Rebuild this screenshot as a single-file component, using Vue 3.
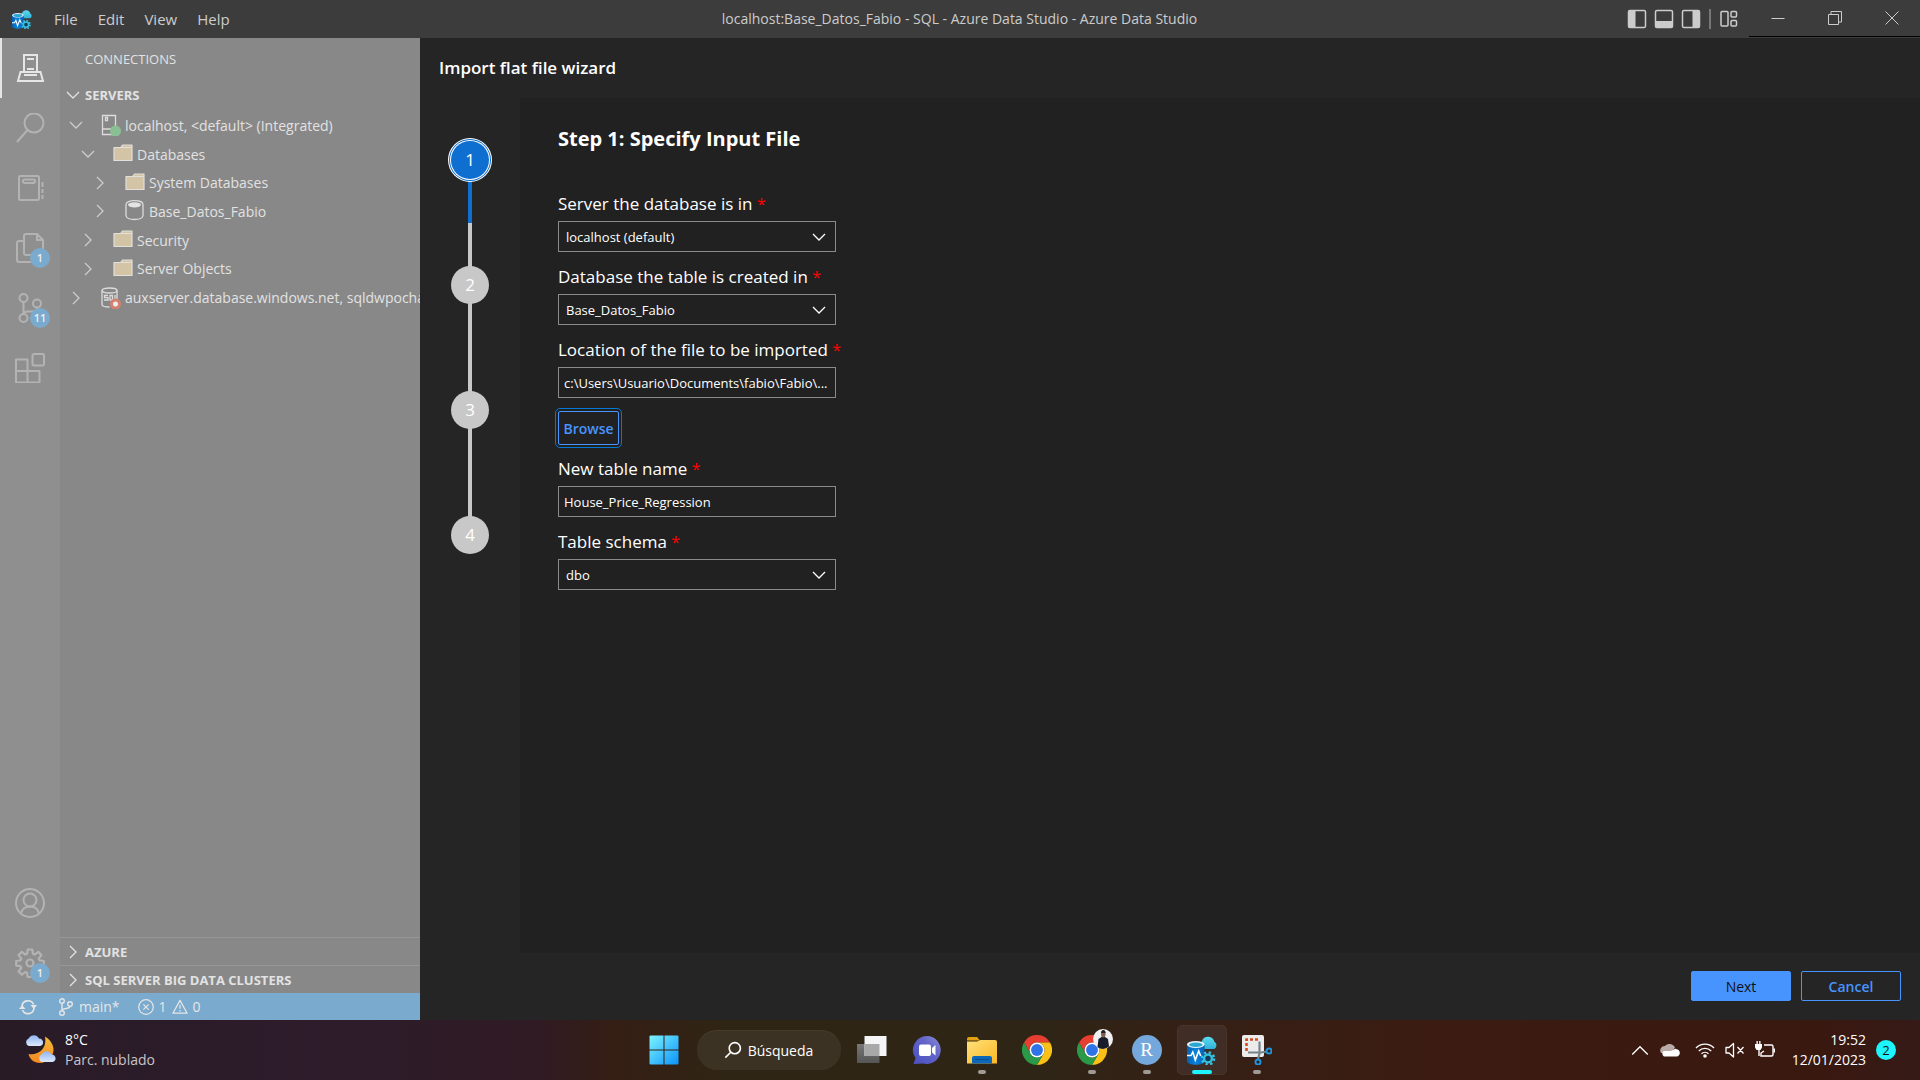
<script setup>
import { ref } from 'vue'

const menus = ['File', 'Edit', 'View', 'Help']

const activities = [
  { icon: 'connections', label: 'Connections', active: true },
  { icon: 'search', label: 'Search' },
  { icon: 'notebook', label: 'Notebooks' },
  { icon: 'files', label: 'Explorer', badge: '1' },
  { icon: 'scm', label: 'Source Control', badge: '11' },
  { icon: 'extensions', label: 'Extensions' },
]
const accountActivities = [
  { icon: 'account', label: 'Accounts' },
  { icon: 'gear', label: 'Manage', badge: '1' },
]

const tree = [
  { level: 0, open: true, icon: 'server', text: 'localhost, <default> (Integrated)' },
  { level: 1, open: true, icon: 'folder', text: 'Databases' },
  { level: 2, open: false, icon: 'folder', text: 'System Databases' },
  { level: 2, open: false, icon: 'database', text: 'Base_Datos_Fabio' },
  { level: 1, open: false, icon: 'folder', text: 'Security' },
  { level: 1, open: false, icon: 'folder', text: 'Server Objects' },
  { level: 0, open: false, icon: 'sqlserver', text: 'auxserver.database.windows.net, sqldwpocha' },
]

const steps = [1, 2, 3, 4]
const currentStep = ref(1)

const server = ref('localhost (default)')
const database = ref('Base_Datos_Fabio')
const location = ref('c:\\Users\\Usuario\\Documents\\fabio\\Fabio\\...')
const tableName = ref('House_Price_Regression')
const schema = ref('dbo')

const pinnedApps = [
  { icon: 'taskview', label: 'Task view' },
  { icon: 'chat', label: 'Chat' },
  { icon: 'explorer', label: 'File Explorer', running: true },
  { icon: 'chrome', label: 'Chrome' },
  { icon: 'chromeprofile', label: 'Chrome profile', running: true },
  { icon: 'rstudio', label: 'RStudio', running: true },
  { icon: 'ads', label: 'Azure Data Studio', focused: true },
  { icon: 'snip', label: 'Snipping Tool', running: true },
]
</script>

<template>
  <div class="desktop">
    <svg class="sprite" aria-hidden="true">
      <defs>
        <linearGradient id="gDb" x1="0" x2="1" y1="0" y2="0">
          <stop offset="0" stop-color="#0560b4" /><stop offset=".5" stop-color="#0a84dc" /><stop offset="1" stop-color="#0560b4" />
        </linearGradient>
        <linearGradient id="gCloud" x1="0" x2="0" y1="0" y2="1">
          <stop offset="0" stop-color="#5bdcf0" /><stop offset="1" stop-color="#2fb2d8" />
        </linearGradient>
        <linearGradient id="gWin" x1="0" x2="1" y1="0" y2="1">
          <stop offset="0" stop-color="#7df3ff" /><stop offset="1" stop-color="#0a93fa" />
        </linearGradient>
        <linearGradient id="gFolder" x1="0" x2="1" y1="0" y2="1">
          <stop offset="0" stop-color="#ffe07a" /><stop offset="1" stop-color="#fcb824" />
        </linearGradient>
        <linearGradient id="gChat" x1="0" x2="1" y1="1" y2="0">
          <stop offset="0" stop-color="#4a50c0" /><stop offset=".6" stop-color="#6264c8" /><stop offset="1" stop-color="#8c8fd8" />
        </linearGradient>
        <linearGradient id="gMoon" x1="0" x2="0" y1="0" y2="1">
          <stop offset="0" stop-color="#f3bd3c" /><stop offset="1" stop-color="#f5871f" />
        </linearGradient>
        <linearGradient id="gMist" x1="0" x2="0" y1="0" y2="1">
          <stop offset="0" stop-color="#8fb4f2" /><stop offset="1" stop-color="#dce8fb" />
        </linearGradient>
        <linearGradient id="gBack" x1="0" x2="0" y1="0" y2="1">
          <stop offset="0" stop-color="#787878" /><stop offset="1" stop-color="#555" />
        </linearGradient>
      </defs>

      <symbol id="i-ads" viewBox="0 0 30 30">
        <path fill="url(#gCloud)" d="M16 14a4.500 4.500 0 0 1-1-8 6.500 6.500 0 0 1 12.400 .8 4 4 0 0 1-.4 7.200z" />
        <path fill="url(#gDb)" d="M0 9.500V26c0 2.200 4 3.800 8.800 3.800S17.600 28.200 17.600 26V9.500z" />
        <ellipse cx="8.800" cy="9.500" rx="8.800" ry="3.400" fill="#e6f4fa" />
        <ellipse cx="8.800" cy="9.800" rx="6.800" ry="2.200" fill="#2ba7d2" />
        <path fill="none" stroke="#fff" stroke-width="1.600" d="M0 20.500h4l1.800-3.500 2.500 8 3.400-9 2 5" />
        <circle cx="21" cy="23.500" r="6" fill="none" stroke="#36c0de" stroke-width="2.600" stroke-dasharray="2.350 2.350" />
        <circle cx="21" cy="23.500" r="3.900" fill="#123c55" stroke="#36c0de" stroke-width="2.400" />
      </symbol>

      <symbol id="i-connections" viewBox="0 0 30 30">
        <path fill="none" stroke="currentColor" stroke-width="2" d="M9 20V2h13v18M9 19H5.500L3 28h25l-2.500-9H22M9 22h13M9 19h13M12 6h7M12 16h7" />
      </symbol>
      <symbol id="i-search" viewBox="0 0 30 30">
        <g fill="none" stroke="currentColor" stroke-width="2"><circle cx="19" cy="10" r="9.500" /><path d="M12.500 17 2 29" /></g>
      </symbol>
      <symbol id="i-notebook" viewBox="0 0 30 30">
        <g fill="none" stroke="currentColor" stroke-width="2"><rect x="4" y="3" width="20" height="24" rx="1.500" /><rect x="8" y="6.500" width="12" height="3.500" rx="1.700" /><path d="M27.500 9v5M27.500 16v4M27.500 22v4" /></g>
      </symbol>
      <symbol id="i-files" viewBox="0 0 30 30">
        <path fill="none" stroke="currentColor" stroke-width="2" stroke-linejoin="round" d="M22 1H11a2 2 0 0 0-2 2v17a2 2 0 0 0 2 2h15a2 2 0 0 0 2-2V7zv6h6M9 8H4a2 2 0 0 0-2 2v17a2 2 0 0 0 2 2h13a2 2 0 0 0 2-2v-5" />
      </symbol>
      <symbol id="i-scm" viewBox="0 0 30 30">
        <g fill="none" stroke="currentColor" stroke-width="2"><circle cx="8.500" cy="5" r="4" /><circle cx="8.500" cy="25" r="4" /><circle cx="22" cy="10.500" r="4" /><path d="M8.500 9v12M22 14.500c0 3-2 4-5 4h-4c-3 0-4.500 1.500-4.500 3" /></g>
      </symbol>
      <symbol id="i-extensions" viewBox="0 0 30 30">
        <g fill="none" stroke="currentColor" stroke-width="2" stroke-linejoin="round"><path d="M1 6.500h11.500v23H1zM1 18h23.500v11.500H1z" /><rect x="17.500" y="1" width="11.500" height="11.500" rx="1.500" /></g>
      </symbol>
      <symbol id="i-account" viewBox="0 0 30 30">
        <g fill="none" stroke="currentColor" stroke-width="2"><circle cx="15" cy="15" r="14" /><circle cx="15" cy="12" r="6.500" /><path d="M6 25.500c1-4.500 4.500-7 9-7s8 2.500 9 7" /></g>
      </symbol>
      <symbol id="i-gear" viewBox="0 0 30 30">
        <g fill="none" stroke="currentColor" stroke-width="2.200"><path stroke-linejoin="round" d="M12.700 1.500h4.600l.6 4.300 1.800.8 3.500-2.700 3.200 3.200-2.700 3.500.8 1.800 4.300.6v4.600l-4.300.6-.8 1.800 2.700 3.500-3.200 3.200-3.500-2.700-1.800.8-.6 4.300h-4.600l-.6-4.300-1.800-.8-3.500 2.700-3.200-3.200 2.700-3.500-.8-1.800-4.300-.6V13l4.300-.6.8-1.800-2.700-3.500 3.200-3.200 3.500 2.700 1.800-.8z" /><circle cx="15" cy="15" r="3.500" /></g>
      </symbol>

      <symbol id="i-down" viewBox="0 0 16 16"><path fill="none" stroke="currentColor" stroke-width="1.300" d="m2 5 6 6 6-6" /></symbol>
      <symbol id="i-right" viewBox="0 0 16 16"><path fill="none" stroke="currentColor" stroke-width="1.300" d="m5 2 6 6-6 6" /></symbol>

      <symbol id="i-server" viewBox="0 0 20 22">
        <path fill="none" stroke="#dcdcdc" stroke-width="1.300" d="M1.500 1.500h13v19h-13zM1.500 15h13M4.500 3.500h2v3h-2z" />
        <circle cx="14.500" cy="17" r="5.500" fill="#89bf92" />
      </symbol>
      <symbol id="i-folder" viewBox="0 0 20 22">
        <path fill="#d3c4a6" stroke="#e2e0dc" stroke-width="1.200" stroke-linejoin="round" d="M1 4.500h6.500l2-2.500H19v15.500H1z" />
        <path fill="none" stroke="#e2e0dc" d="M8 4.500h10.500" />
      </symbol>
      <symbol id="i-database" viewBox="0 0 20 22">
        <path fill="none" stroke="#dcdcdc" stroke-width="1.300" d="M1 4.500v11C1 18 5 19.500 9.500 19.500S18 18 18 15.500v-11C18 2 14 .7 9.500 .7S1 2 1 4.500z" />
        <ellipse cx="9.500" cy="4.800" rx="6.500" ry="2.600" fill="#e4e4e4" />
      </symbol>
      <symbol id="i-sqlserver" viewBox="0 0 20 22">
        <g fill="none" stroke="#dcdcdc" stroke-width="1.300"><ellipse cx="8.500" cy="3.500" rx="7.500" ry="2.500" /><path d="M1 3.500v14c0 1.500 3 2.500 7.500 2.500M16 3.500V12M7 8.500H3.500v2.200H7V13H3M9 8.500h2.500V13H9zM14 8v5h2" /></g>
        <circle cx="14.500" cy="17" r="5.500" fill="#d4826f" /><circle cx="14.500" cy="17" r="2.500" fill="#eee" />
      </symbol>

      <symbol id="i-sync" viewBox="0 0 20 18">
        <path fill="none" stroke="currentColor" stroke-width="1.700" d="M4 8a6 6 0 0 1 11.500-1.500M16 10A6 6 0 0 1 4.500 12" />
        <path fill="currentColor" d="M12.500 7H19l-3.200 4zM1 11h6.500L4.200 7z" />
      </symbol>
      <symbol id="i-branch" viewBox="0 0 16 18">
        <g fill="none" stroke="currentColor" stroke-width="1.400"><circle cx="4" cy="3" r="2.300" /><circle cx="4" cy="15" r="2.300" /><circle cx="12" cy="6" r="2.300" /><path d="M4 5.500v7M12 8.500c0 3-8 1-8 4" /></g>
      </symbol>
      <symbol id="i-error" viewBox="0 0 18 18"><g fill="none" stroke="currentColor" stroke-width="1.400"><circle cx="9" cy="9" r="8.200" /><path d="m6 6 6 6m0-6-6 6" /></g></symbol>
      <symbol id="i-warning" viewBox="0 0 18 18"><path fill="none" stroke="currentColor" stroke-width="1.400" stroke-linejoin="round" d="m9 1.500 8 14.500H1zM9 6.500V11M9 12.500v1.500" /></symbol>

      <symbol id="i-left-panel" viewBox="0 0 20 20"><rect x="1.500" y="1.500" width="17" height="17" rx="1.500" fill="none" stroke="currentColor" stroke-width="1.500" /><path fill="currentColor" d="M1.500 1.500h7v17h-7z" /></symbol>
      <symbol id="i-bottom-panel" viewBox="0 0 20 20"><rect x="1.500" y="1.500" width="17" height="17" rx="1.500" fill="none" stroke="currentColor" stroke-width="1.500" /><path fill="currentColor" d="M1.500 12h17v6.500h-17z" /></symbol>
      <symbol id="i-right-panel" viewBox="0 0 20 20"><rect x="1.500" y="1.500" width="17" height="17" rx="1.500" fill="none" stroke="currentColor" stroke-width="1.500" /><path fill="currentColor" d="M11.500 1.500h7v17h-7z" /></symbol>
      <symbol id="i-layout" viewBox="0 0 20 20"><g fill="none" stroke="currentColor" stroke-width="1.500"><rect x="2" y="2.500" width="7" height="14.500" rx="1" /><rect x="12" y="2.500" width="5.500" height="5.500" rx="1" /><rect x="12" y="11.500" width="5.500" height="5.500" rx="1" /></g></symbol>
      <symbol id="i-min" viewBox="0 0 14 14"><path stroke="currentColor" d="M.5 7.500h13" /></symbol>
      <symbol id="i-max" viewBox="0 0 14 14"><path fill="none" stroke="currentColor" d="M.5 3.500h10v10H.5zM3 3.500v-3h10.500V11h-3" /></symbol>
      <symbol id="i-close" viewBox="0 0 14 14"><path stroke="currentColor" d="m.5.5 13 13m0-13-13 13" /></symbol>

      <symbol id="i-weather" viewBox="0 0 32 30">
        <path fill="url(#gMoon)" d="M20 1.500c3.500 2 9 7.500 8.500 14C28 23 21.500 28 15 28 9 28 4.500 24 3.500 19c7 1.500 19-3 16.500-17.500z" />
        <path fill="url(#gMist)" d="M4 11a4 4 0 0 1-.5-7.500C6-1 12-1 14 3.500c5 0 5.500 7 1 7.500z" />
        <path fill="url(#gMist)" d="M17 27a4 4 0 0 1-.5-7.500c2.500-4.500 8-4.500 10 0 5 0 5.500 7 1 7.500z" />
      </symbol>
      <symbol id="i-windows" viewBox="0 0 30 30"><path fill="url(#gWin)" d="M1.500.5h13v14h-14v-13a1 1 0 0 1 1-1zM15.500.5h13a1 1 0 0 1 1 1v13h-14zM.5 15.500h14v14h-13a1 1 0 0 1-1-1zM15.500 15.500h14v13a1 1 0 0 1-1 1h-13z" /></symbol>
      <symbol id="i-find" viewBox="0 0 20 20"><g fill="none" stroke="#fff" stroke-width="1.800"><circle cx="12" cy="8" r="6.200" /><path d="m7.500 12.500-6 6" /></g></symbol>
      <symbol id="i-taskview" viewBox="0 0 30 30"><path fill="url(#gBack)" d="M0 9h22.500v19H0z" /><path fill="#f5f5f5" d="M7.500 1h22v20h-22z" /><path fill="#a8a8a8" d="M7.500 9h15v12h-15z" /></symbol>
      <symbol id="i-chat" viewBox="0 0 30 30"><path fill="url(#gChat)" d="M15 1a14 14 0 1 1-4 27.500L1.500 29l2-6A14 14 0 0 1 15 1z" /><rect x="7" y="9.500" width="12" height="11.500" rx="2" fill="#fff" /><path fill="#fff" d="m20 13 3.500-3v10.500L20 17.500z" /></symbol>
      <symbol id="i-explorer" viewBox="0 0 30 30"><path fill="#e0a010" d="M0 4a2 2 0 0 1 2-2h8l3 3.500H0z" /><path fill="url(#gFolder)" d="M0 6.500h10L13.500 5H28a2 2 0 0 1 2 2v21.500H0z" /><path fill="#0e68ba" d="M5 28.500V23a2 2 0 0 1 2-2h16a2 2 0 0 1 2 2v5.500z" /><path stroke="#0a4f91" stroke-width="1.200" d="M8 24.500h14" /></symbol>
      <symbol id="i-chrome" viewBox="0 0 48 48">
        <path fill="#e63e31" d="M3.200 12a24 24 0 0 1 41.600 0H24a12 12 0 0 0-10.400 18z" />
        <path fill="#fbc116" d="M44.800 12A24 24 0 0 1 24 48l10.400-18A12 12 0 0 0 24 12z" />
        <path fill="#2a9a48" d="M24 48A24 24 0 0 1 3.200 12l10.400 18a12 12 0 0 0 20.800 0z" />
        <circle cx="24" cy="24" r="12" fill="#fff" /><circle cx="24" cy="24" r="9.500" fill="#2f73e8" />
      </symbol>
      <symbol id="i-snip" viewBox="0 0 30 30">
        <rect width="22" height="22" rx="2" fill="#ececec" />
        <path fill="none" stroke="#d64a1c" stroke-width="2.600" stroke-dasharray="3 2" d="M4.500 16V4.500H16" />
        <path stroke="#77838b" stroke-width="2.200" fill="none" d="M17.500 6.500v12L16 24M6 17.500h13l6-1" />
        <g fill="none" stroke="#1c93dc" stroke-width="2"><circle cx="16" cy="27" r="2.500" /><circle cx="27" cy="16" r="2.500" /></g>
      </symbol>

      <symbol id="i-up" viewBox="0 0 18 18"><path fill="none" stroke="#fff" stroke-width="1.200" d="m2 13 7-7 7 7" /></symbol>
      <symbol id="i-onedrive" viewBox="0 0 20 20"><path fill="#b8aaa6" d="M1 13a4.500 4.500 0 0 1 4-7 6 6 0 0 1 10 1.500L11 13z" /><path fill="#fff" d="M4 16.500a3.500 3.500 0 0 1-1-5c3-1.500 6 .5 9-1s3-2 4-1.500c5 .5 5 7 .5 7.500z" /></symbol>
      <symbol id="i-wifi" viewBox="0 0 20 20"><g fill="none" stroke="#fff" stroke-width="1.400"><path d="M1 8a12.500 12.500 0 0 1 18 0M3.800 11a8.700 8.700 0 0 1 12.400 0M6.500 13.800a5 5 0 0 1 7 0" /></g><circle cx="10" cy="16" r="1.800" fill="#fff" /></symbol>
      <symbol id="i-mute" viewBox="0 0 20 20"><path fill="none" stroke="#fff" stroke-width="1.300" stroke-linejoin="round" d="M1 7.500h3l4.500-4v13.500L4 13H1zM12.500 7l6 6.500m0-6.500-6 6.500" /></symbol>
      <symbol id="i-battery" viewBox="0 0 20 20"><path fill="none" stroke="#fff" stroke-width="1.400" d="M9 5h7.500A1.500 1.500 0 0 1 18 6.500v8a1.500 1.500 0 0 1-1.500 1.500H6v-3l3-2M4 9v7" /><path fill="#fff" d="M0 4h7v3.500L5.500 10h-4L0 7.500zM1.500 1h1.300v3H1.500zM4.200 1h1.300v3H4.200zM18.500 8.500H20v4h-1.500z" /></symbol>
    </svg>

    <header class="titlebar">
      <div class="title-left">
        <svg class="app-logo"><use href="#i-ads" /></svg>
        <nav class="menu">
          <button v-for="m in menus" :key="m" type="button">{{ m }}</button>
        </nav>
      </div>
      <div class="title">localhost:Base_Datos_Fabio - SQL - Azure Data Studio - Azure Data Studio</div>
      <div class="layout-controls">
        <button type="button" aria-label="Toggle primary side bar"><svg><use href="#i-left-panel" /></svg></button>
        <button type="button" aria-label="Toggle panel"><svg><use href="#i-bottom-panel" /></svg></button>
        <button type="button" aria-label="Toggle secondary side bar"><svg><use href="#i-right-panel" /></svg></button>
        <span class="divider"></span>
        <button type="button" aria-label="Customize layout"><svg><use href="#i-layout" /></svg></button>
      </div>
      <div class="window-controls">
        <button type="button" aria-label="Minimize"><svg><use href="#i-min" /></svg></button>
        <button type="button" aria-label="Restore"><svg><use href="#i-max" /></svg></button>
        <button type="button" aria-label="Close"><svg><use href="#i-close" /></svg></button>
      </div>
    </header>

    <div class="workbench">
      <div class="left">
        <div class="left-main">
          <nav class="activitybar">
            <button v-for="a in activities" :key="a.icon" type="button" :aria-label="a.label" :class="{ active: a.active }">
              <svg><use :href="'#i-' + a.icon" /></svg>
              <span v-if="a.badge" class="count">{{ a.badge }}</span>
            </button>
            <span class="spacer"></span>
            <button v-for="a in accountActivities" :key="a.icon" type="button" :aria-label="a.label">
              <svg><use :href="'#i-' + a.icon" /></svg>
              <span v-if="a.badge" class="count">{{ a.badge }}</span>
            </button>
          </nav>
          <aside class="sidebar">
            <h2>CONNECTIONS</h2>
            <h3><svg><use href="#i-down" /></svg>SERVERS</h3>
            <ul class="tree">
              <li v-for="n in tree" :key="n.text" :class="'level-' + n.level">
                <svg class="twisty"><use :href="n.open ? '#i-down' : '#i-right'" /></svg>
                <svg class="node-icon"><use :href="'#i-' + n.icon" /></svg>
                <span>{{ n.text }}</span>
              </li>
            </ul>
            <span class="spacer"></span>
            <h3 class="bordered"><svg><use href="#i-right" /></svg>AZURE</h3>
            <h3 class="bordered"><svg><use href="#i-right" /></svg>SQL SERVER BIG DATA CLUSTERS</h3>
          </aside>
        </div>
        <footer class="statusbar">
          <svg class="sync"><use href="#i-sync" /></svg>
          <span class="status-item"><svg class="branch"><use href="#i-branch" /></svg>main*</span>
          <span class="status-item"><svg><use href="#i-error" /></svg>1<svg><use href="#i-warning" /></svg>0</span>
        </footer>
      </div>

      <main class="wizard">
        <h1>Import flat file wizard</h1>
        <div class="wizard-body">
          <ol class="steps">
            <li v-for="s in steps" :key="s" :class="{ current: s === currentStep }"><span>{{ s }}</span></li>
          </ol>
          <form class="page" @submit.prevent>
            <h2>Step 1: Specify Input File</h2>
            <div class="field">
              <label for="server">Server the database is in <b>*</b></label>
              <div class="select">
                <select id="server" v-model="server"><option>localhost (default)</option></select>
                <svg><use href="#i-down" /></svg>
              </div>
            </div>
            <div class="field">
              <label for="database">Database the table is created in <b>*</b></label>
              <div class="select">
                <select id="database" v-model="database"><option>Base_Datos_Fabio</option></select>
                <svg><use href="#i-down" /></svg>
              </div>
            </div>
            <div class="field">
              <label for="location">Location of the file to be imported <b>*</b></label>
              <input id="location" v-model="location" type="text">
            </div>
            <button type="button" class="browse">Browse</button>
            <div class="field">
              <label for="table">New table name <b>*</b></label>
              <input id="table" v-model="tableName" type="text">
            </div>
            <div class="field">
              <label for="schema">Table schema <b>*</b></label>
              <div class="select">
                <select id="schema" v-model="schema"><option>dbo</option></select>
                <svg><use href="#i-down" /></svg>
              </div>
            </div>
          </form>
        </div>
        <div class="actions">
          <button type="button" class="primary">Next</button>
          <button type="button">Cancel</button>
        </div>
      </main>
    </div>

    <footer class="taskbar">
      <div class="weather">
        <svg><use href="#i-weather" /></svg>
        <div><p>8°C</p><p class="muted">Parc. nublado</p></div>
      </div>
      <div class="apps">
        <button type="button" class="app" aria-label="Start"><svg><use href="#i-windows" /></svg></button>
        <button type="button" class="find"><svg><use href="#i-find" /></svg>Búsqueda</button>
        <button v-for="a in pinnedApps" :key="a.icon" type="button" class="app" :aria-label="a.label" :class="{ running: a.running, focused: a.focused }">
          <span v-if="a.icon === 'rstudio'" class="rstudio">R</span>
          <svg v-else-if="a.icon === 'chromeprofile'"><use href="#i-chrome" /></svg>
          <svg v-else><use :href="'#i-' + a.icon" /></svg>
          <svg v-if="a.icon === 'chromeprofile'" class="avatar" viewBox="0 0 20 20">
            <circle cx="10" cy="10" r="10" fill="#f0f0f2" />
            <path fill="#171d2a" d="M4.500 18.300 5.500 10l3-2h3.500l3 2 1 7.500a10 10 0 0 1-11.500.8z" />
            <ellipse cx="10.300" cy="5" rx="2.300" ry="3.500" fill="#80614f" />
            <path fill="#222" d="M8 4c0-4 4.600-4 4.600 0z" />
          </svg>
        </button>
      </div>
      <div class="tray">
        <svg><use href="#i-up" /></svg>
        <svg><use href="#i-onedrive" /></svg>
        <svg class="wifi"><use href="#i-wifi" /></svg>
        <svg><use href="#i-mute" /></svg>
        <svg><use href="#i-battery" /></svg>
        <div class="clock"><p>19:52</p><p>12/01/2023</p></div>
        <span class="notices">2</span>
      </div>
    </footer>
  </div>
</template>

<style>
body {
  margin: 0;
  background: #252526;
}
</style>

<style scoped>
.desktop {
  display: flex;
  flex-direction: column;
  min-height: 100vh;
  font-family: "Open Sans", "Noto Sans", sans-serif;
  font-size: 14px;
  color: #fff;
}
.desktop * {
  box-sizing: border-box;
}
.sprite {
  position: absolute;
  width: 0;
  height: 0;
}
svg {
  flex: none;
  display: block;
}
button {
  font: inherit;
  color: inherit;
  background: none;
  border: 0;
  padding: 0;
  display: flex;
  align-items: center;
  justify-content: center;
}
h1, h2, h3, p, ul, ol {
  margin: 0;
  padding: 0;
  list-style: none;
}
.spacer {
  flex: 1;
}

/* Title bar */
.titlebar {
  display: flex;
  align-items: stretch;
  height: 38px;
  background: #3c3c3c;
  color: #ccc;
}
.title-left {
  display: flex;
  align-items: center;
  width: 292px;
  padding-left: 12px;
}
.app-logo {
  width: 20px;
  height: 20px;
  margin-right: 12px;
}
.menu {
  display: flex;
}
.menu button {
  padding: 0 10px;
  font-size: 15px;
}
.title {
  flex: 1;
  text-align: center;
  line-height: 38px;
  white-space: nowrap;
}
.layout-controls {
  display: flex;
  align-items: center;
  gap: 7px;
  width: 114px;
}
.layout-controls svg {
  width: 20px;
  height: 20px;
}
.divider {
  width: 2px;
  height: 20px;
  margin: 0 1px;
  background: #777;
}
.window-controls {
  display: flex;
  height: 37px;
  margin-left: 8px;
  border-bottom: 1px solid #000;
}
.window-controls button {
  width: 57px;
}
.window-controls svg {
  width: 14px;
  height: 14px;
}

/* Workbench */
.workbench {
  display: flex;
  flex: 1;
}
.left {
  display: flex;
  flex-direction: column;
  flex: none;
  width: 420px;
}
.left-main {
  display: flex;
  flex: 1;
}
.activitybar {
  display: flex;
  flex-direction: column;
  width: 60px;
  background: #8f8f8f;
  color: #b3b3b3;
}
.activitybar button {
  position: relative;
  height: 60px;
}
.activitybar button.active {
  color: #e6e6e6;
  box-shadow: inset 2px 0 #e6e6e6;
}
.activitybar svg {
  width: 30px;
  height: 30px;
}
.count {
  position: absolute;
  left: 30px;
  top: 30px;
  width: 20px;
  height: 20px;
  border-radius: 10px;
  background: #7aaacd;
  color: #eee;
  font-size: 11px;
  font-weight: 600;
  line-height: 20px;
  text-align: center;
}
.sidebar {
  display: flex;
  flex-direction: column;
  flex: 1;
  min-width: 0;
  background: #888;
  color: #e2e2e2;
}
.sidebar h2 {
  padding-left: 25px;
  font-size: 13px;
  font-weight: 400;
  line-height: 43px;
}
.sidebar h3 {
  display: flex;
  align-items: center;
  gap: 4px;
  height: 28px;
  padding-left: 5px;
  font-size: 13px;
  font-weight: 700;
}
.sidebar h3 svg {
  width: 16px;
  height: 16px;
}
.sidebar h3.bordered {
  border-top: 1px solid #979797;
}
.tree {
  display: grid;
  grid-auto-rows: 1fr;
  height: 201px;
  margin-top: 2px;
}
.tree li {
  display: flex;
  align-items: center;
  padding-left: 8px;
  overflow: hidden;
  white-space: nowrap;
}
.tree .level-1 {
  padding-left: 20px;
}
.tree .level-2 {
  padding-left: 32px;
}
.twisty {
  width: 16px;
  height: 16px;
  margin-right: 17px;
  color: #ccc;
}
.node-icon {
  width: 20px;
  height: 22px;
  margin-right: 4px;
}
.statusbar {
  display: flex;
  align-items: center;
  height: 27px;
  padding-left: 18px;
  background: #7aaacd;
  color: #e6e6e6;
}
.statusbar svg {
  width: 16px;
  height: 16px;
}
.statusbar .sync {
  width: 20px;
  height: 18px;
  margin-right: 20px;
}
.statusbar .branch {
  height: 18px;
}
.status-item {
  display: flex;
  align-items: center;
  gap: 5px;
  margin-right: 18px;
}

/* Wizard dialog */
.wizard {
  display: flex;
  flex-direction: column;
  flex: 1;
  background: #252526;
}
.wizard h1 {
  padding-left: 19px;
  font-size: 17px;
  font-weight: 600;
  line-height: 60px;
}
.wizard-body {
  display: flex;
  flex: 1;
}
.steps {
  width: 100px;
  padding-top: 40px;
}
.steps li {
  position: relative;
  display: flex;
  justify-content: center;
  height: 125px;
}
.steps li:not(:last-child)::before {
  content: "";
  position: absolute;
  top: 22px;
  width: 4px;
  height: 125px;
  background: #c8c8c8;
}
.steps li.current::before {
  background: linear-gradient(#0e6fd0 63px, #c8c8c8 63px) !important;
}
.steps span {
  position: relative;
  width: 38px;
  height: 38px;
  margin-top: 3px;
  border-radius: 50%;
  background: #c8c8c8;
  font-size: 17px;
  line-height: 38px;
  text-align: center;
}
.steps .current span {
  background: #0e6fd0;
  box-shadow: 0 0 0 1px #fff, 0 0 0 2px #0e6fd0, 0 0 0 3px #fff;
}
.page {
  flex: 1;
  padding: 24px 38px;
  background: #212121;
}
.page h2 {
  margin-bottom: 36px;
  font-size: 20px;
  font-weight: 700;
  line-height: 34px;
}
.field {
  width: 278px;
  margin-bottom: 13px;
}
.field label {
  display: block;
  margin-bottom: 5px;
  font-size: 17px;
  line-height: 24px;
  white-space: nowrap;
}
.field b {
  font-size: 16px;
  font-weight: 400;
  color: #f00;
}
.field input,
.field select {
  display: block;
  width: 100%;
  height: 31px;
  margin: 0;
  padding: 0 5px;
  border: 1px solid #8a8a8a;
  border-radius: 0;
  background: transparent;
  color: #fff;
  font: inherit;
  font-size: 13px;
  text-overflow: ellipsis;
}
.field select {
  appearance: none;
  padding: 0 7px;
}
.select {
  position: relative;
}
.select svg {
  position: absolute;
  right: 9px;
  top: 8px;
  width: 16px;
  height: 16px;
  pointer-events: none;
}
.browse {
  width: 61px;
  height: 34px;
  margin-bottom: 12px;
  border: 1px solid #4894fe;
  border-radius: 2px;
  outline: 1px solid #0078d4;
  outline-offset: 2px;
  color: #4894fe;
  font-weight: 600;
}
.actions {
  display: flex;
  justify-content: flex-end;
  gap: 10px;
  padding: 18px 19px 19px;
}
.actions button {
  width: 100px;
  height: 30px;
  border: 1px solid #4894fe;
  border-radius: 2px;
  color: #4894fe;
  font-weight: 600;
}
.actions .primary {
  background: #4894fe;
  color: #111;
  font-weight: 400;
}

/* Taskbar */
.taskbar {
  display: grid;
  grid-template-columns: 1fr auto 1fr;
  align-items: center;
  height: 60px;
  background: linear-gradient(90deg, #281b26, #2e1c2b 18%, #301b24 28%, #351e14 32%, #2f2515 38%, #2e2516 54%, #352015 62%, #3b1b12 75%, #391810 95%, #361a17);
}
.weather {
  display: flex;
  align-items: center;
  gap: 8px;
  padding-left: 25px;
  line-height: 20px;
}
.weather svg {
  width: 32px;
  height: 30px;
}
.muted {
  color: #c9c4c8;
}
.apps {
  display: flex;
  align-items: center;
  gap: 5px;
}
.app {
  position: relative;
  width: 50px;
  height: 50px;
  border: 1px solid transparent;
  border-radius: 5px;
}
.app > svg {
  width: 30px;
  height: 30px;
}
.app.running::after,
.app.focused::after {
  content: "";
  position: absolute;
  bottom: 0;
  width: 8px;
  height: 4px;
  border-radius: 2px;
  background: #a09a94;
}
.app.focused {
  border-color: #493429;
  background: #402e26;
}
.app.focused::after {
  width: 20px;
  background: #1ef4fb;
}
.app .avatar {
  position: absolute;
  right: 3px;
  top: 3px;
  width: 20px;
  height: 20px;
}
.rstudio {
  width: 30px;
  height: 30px;
  border-radius: 50%;
  background: #74a8dc;
  font-family: "Liberation Serif", serif;
  font-size: 19px;
  line-height: 29px;
  text-align: center;
}
.find {
  gap: 6px;
  width: 144px;
  height: 40px;
  margin: 0 1px 0 3px;
  border-radius: 20px;
  background: #3c3223;
  box-shadow: inset 0 1px #463c2e;
}
.find svg {
  width: 18px;
  height: 18px;
}
.tray {
  display: flex;
  align-items: center;
  justify-content: flex-end;
  gap: 10px;
  padding-right: 24px;
}
.tray svg {
  width: 20px;
  height: 20px;
}
.tray .wifi {
  margin-left: 5px;
}
.clock {
  width: 81px;
  line-height: 20px;
  text-align: right;
}
.notices {
  width: 20px;
  height: 20px;
  border-radius: 50%;
  background: #1ef4fb;
  color: #111;
  font-size: 13px;
  line-height: 20px;
  text-align: center;
}
</style>
